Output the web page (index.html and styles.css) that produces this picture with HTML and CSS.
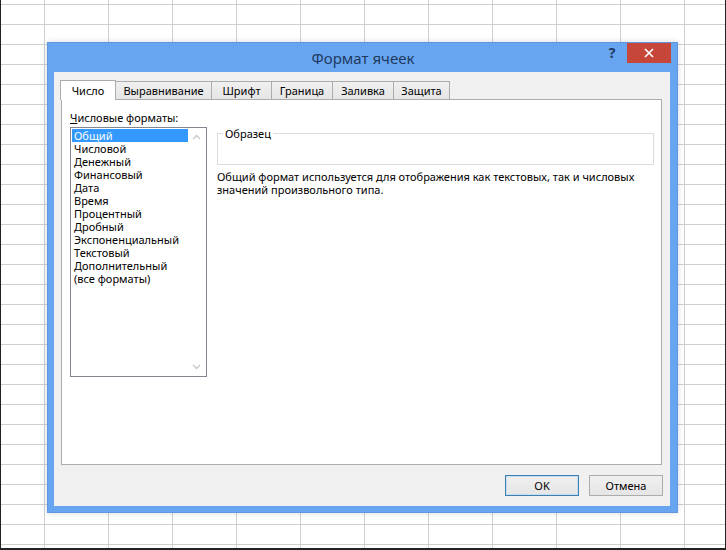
FILE: index.html
```html
<!DOCTYPE html>
<html lang="ru">
<head>
<meta charset="utf-8">
<title>Формат ячеек</title>
<link rel="stylesheet" href="styles.css">
</head>
<body>
<div class="sheet">
  <div class="dialog">
    <div class="titlebar">
      <div class="tb-side"></div>
      <div class="title">Формат ячеек</div>
      <div class="tb-side tb-right">
        <span class="help">?</span>
        <span class="close">
          <svg width="10" height="10" viewBox="0 0 10 10"><path d="M1 1 L9 9 M9 1 L1 9" stroke="#fff" stroke-width="1.7" fill="none"/></svg>
        </span>
      </div>
    </div>
    <div class="client">
      <div class="tabs">
        <div class="tab tab-num active">Число</div>
        <div class="tab tab-align">Выравнивание</div>
        <div class="tab tab-font">Шрифт</div>
        <div class="tab tab-border">Граница</div>
        <div class="tab tab-fill">Заливка</div>
        <div class="tab tab-protect">Защита</div>
      </div>
      <div class="panel">
        <div class="col-left">
          <div class="label"><span class="ul">Ч</span>исловые форматы:</div>
          <div class="listbox">
            <ul class="items">
              <li class="sel">Общий</li>
              <li>Числовой</li>
              <li>Денежный</li>
              <li>Финансовый</li>
              <li>Дата</li>
              <li>Время</li>
              <li>Процентный</li>
              <li>Дробный</li>
              <li>Экспоненциальный</li>
              <li>Текстовый</li>
              <li>Дополнительный</li>
              <li>(все форматы)</li>
            </ul>
            <div class="scrollbar">
              <svg width="9" height="6" viewBox="0 0 9 6"><path d="M1 5 L4.5 1.5 L8 5" stroke="#c8c8c8" stroke-width="1.3" fill="none"/></svg>
              <svg width="9" height="6" viewBox="0 0 9 6"><path d="M1 1 L4.5 4.5 L8 1" stroke="#c8c8c8" stroke-width="1.3" fill="none"/></svg>
            </div>
          </div>
        </div>
        <div class="col-right">
          <fieldset class="sample"><legend>Образец</legend></fieldset>
          <p class="desc">Общий формат используется для отображения как текстовых, так и числовых значений произвольного типа.</p>
        </div>
      </div>
      <div class="buttons">
        <button class="btn btn-default">OK</button>
        <button class="btn">Отмена</button>
      </div>
    </div>
  </div>
</div>
</body>
</html>
```

FILE: styles.css
```css
html, body {
  margin: 0;
  padding: 0;
}
body {
  font-family: "Noto Sans", "Open Sans", sans-serif;
  font-size: 11px;
  color: #000;
}
.sheet {
  position: relative;
  width: 726px;
  height: 550px;
  box-sizing: border-box;
  border-left: 1px solid #222;
  border-right: 1px solid #222;
  border-bottom: 2px solid #222;
  background-color: #fff;
  background-image:
    linear-gradient(to right, #cfcfcf 1px, transparent 1px),
    linear-gradient(to bottom, #cfcfcf 1px, transparent 1px);
  background-size: 64px 100%, 100% 20px;
  background-position: 43px 0, 0 4px;
}
.dialog {
  position: absolute;
  left: 46px;
  top: 42px;
  width: 631px;
  height: 471px;
  box-sizing: border-box;
  background: #68a5f0;
  border: 1px solid #5d97df;
  padding: 0 7px 6px 6px;
  display: flex;
  flex-direction: column;
  box-shadow: 0 0 6px rgba(0,0,0,0.15);
}
.titlebar {
  height: 29px;
  display: grid;
  grid-template-columns: 1fr auto 1fr;
  align-items: start;
  flex: none;
}
.title {
  font-size: 15px;
  color: #1e3a60;
  line-height: 30px;
  padding-left: 2px;
}
.tb-right {
  display: flex;
  justify-content: flex-end;
  align-items: flex-start;
}
.help {
  font-weight: bold;
  font-size: 14px;
  color: #1e3a60;
  width: 14px;
  text-align: center;
  line-height: 18px;
  margin-top: 1px;
  margin-right: 8px;
}
.close {
  width: 44px;
  height: 20px;
  background: #c7463a;
  display: flex;
  align-items: center;
  justify-content: center;
  margin-right: -1px;
}
.client {
  flex: 1;
  background: #f0f0f0;
  padding: 9px 8px 0 7px;
  display: flex;
  flex-direction: column;
}
.tabs {
  display: flex;
  height: 18px;
  align-items: flex-end;
  position: relative;
  z-index: 1;
}
.tab {
  height: 18px;
  box-sizing: border-box;
  border: 1px solid #acacac;
  border-bottom: none;
  border-left: none;
  background: linear-gradient(#f0f0f0, #e5e5e5);
  text-align: center;
  line-height: 17px;
}
.tab.active {
  height: 20px;
  background: #fff;
  border: 1px solid #acacac;
  border-bottom: none;
  margin-bottom: -1px;
  line-height: 19px;
}
.tab-num { width: 56px; margin-left: -1px; }
.tab-align { width: 96px; }
.tab-font { width: 60px; }
.tab-border { width: 61px; }
.tab-fill { width: 61px; }
.tab-protect { width: 56px; }
.panel {
  width: 601px;
  height: 366px;
  box-sizing: border-box;
  background: #fff;
  border: 1px solid #acacac;
  padding: 11px 7px 0 8px;
  display: flex;
  gap: 10px;
}
.col-left {
  width: 137px;
  flex: none;
}
.label {
  line-height: 14px;
  height: 16px;
}
.ul { text-decoration: underline; }
.listbox {
  width: 137px;
  height: 250px;
  box-sizing: border-box;
  border: 1px solid #828790;
  padding: 1px;
  display: flex;
}
.items {
  list-style: none;
  margin: 0;
  padding: 0;
  flex: 1;
}
.items li {
  height: 13px;
  line-height: 13px;
  padding-left: 2px;
  white-space: nowrap;
}
.items li.sel {
  background: #3399ff;
  color: #fff;
}
.scrollbar {
  width: 17px;
  flex: none;
  display: flex;
  flex-direction: column;
  justify-content: space-between;
  align-items: center;
  padding: 5px 0 5px;
  box-sizing: border-box;
}
.col-right {
  flex: 1;
  padding-top: 16px;
}
.sample {
  margin: 0;
  padding: 0;
  height: 38px;
  box-sizing: border-box;
  border: 1px solid #dcdcdc;
  min-inline-size: 0;
}
.sample legend {
  margin-left: 5px;
  padding: 0 2px;
  line-height: 13px;
}
.desc {
  margin: 5px 0 0 0;
  line-height: 13px;
  width: 430px;
}
.buttons {
  display: flex;
  justify-content: flex-end;
  gap: 10px;
  margin-top: 10px;
  margin-right: -1px;
}
.btn {
  width: 74px;
  height: 21px;
  box-sizing: border-box;
  font-family: inherit;
  font-size: 11px;
  color: #000;
  background: linear-gradient(#f0f0f0, #e5e5e5);
  border: 1px solid #acacac;
  padding: 0;
  border-radius: 0;
}
.btn-default {
  border-color: #3c7fb1;
  box-shadow: inset 0 0 0 1px #c6dcf0;
}
```
